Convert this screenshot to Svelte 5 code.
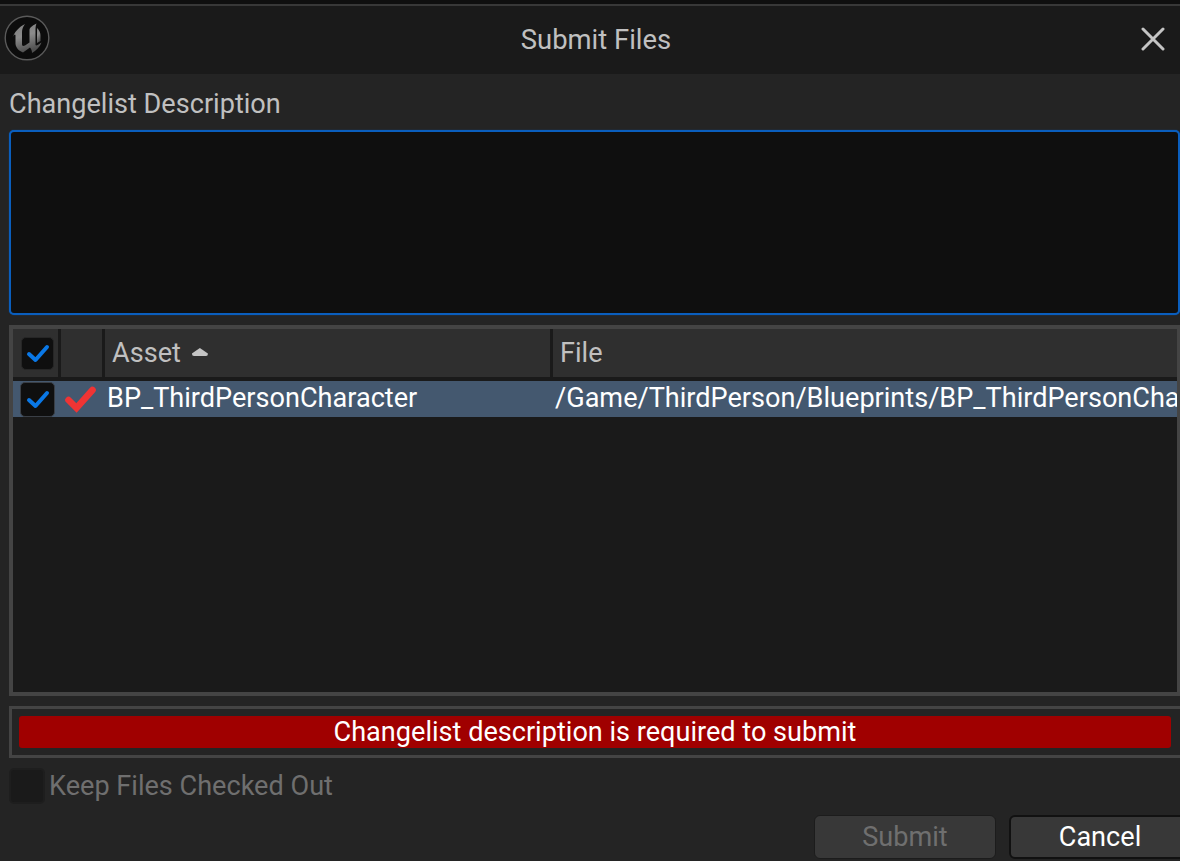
<script>
	const columns = [
		{ name: 'Asset', sorted: true },
		{ name: 'File', sorted: false }
	];
	const files = [
		{
			asset: 'BP_ThirdPersonCharacter',
			path: '/Game/ThirdPerson/Blueprints/BP_ThirdPersonCharacter.BP_ThirdPersonCharacter'
		}
	];
</script>

{#snippet tick()}
	<svg class="tick" viewBox="0 0 24 24" width="24" height="24">
		<path d="M3 13 L9.500 19 L21 6" fill="none" stroke="#0a78e6" stroke-width="4" stroke-linecap="round" stroke-linejoin="round" />
	</svg>
{/snippet}

<div class="window">
	<div class="strip"></div>
	<header class="titlebar">
		<svg class="logo" viewBox="0 0 46 46" width="46" height="46">
			<defs>
				<linearGradient id="ue" x1="0" y1="0" x2="0.300" y2="1">
					<stop offset="0" stop-color="#7c7c7c" />
					<stop offset="0.500" stop-color="#8c8c8c" />
					<stop offset="1" stop-color="#505050" />
				</linearGradient>
			</defs>
			<circle cx="23" cy="23" r="21.800" fill="#0c0c0c" stroke="#5a5a5a" stroke-width="1.400" />
			<path fill="url(#ue)" d="M8 23.500 C10.500 17 15 12 21 9 C19 12 18 14 18 17 L18 29 C18 31 19 31.500 21 30.500 L25.500 27.500 L25.500 15 C25.500 13 27.500 11 32.500 8.500 C31.500 11 31.500 13 31.500 16 L31.500 30 C32 31 33.500 30.500 37.500 27.500 C36 32 32 35.500 28 38 C28 35.500 27 33.500 26 32.500 L19 37.500 C15 36 12 33 11.500 29 L11.500 20.500 C11.500 18.500 9.500 19.500 8 23.500 Z" />
			<path fill="url(#ue)" d="M33 13 C35.500 15 36.500 18 36.500 21 L36.500 26 L33 28 Z" />
		</svg>
		<h1>Submit Files</h1>
		<button class="close" aria-label="Close">
			<svg viewBox="0 0 24 24" width="24" height="24">
				<path d="M2 2 L22 22 M22 2 L2 22" stroke="#c4c4c4" stroke-width="3" stroke-linecap="round" fill="none" />
			</svg>
		</button>
	</header>

	<main class="body">
		<div class="label">Changelist Description</div>
		<div class="description"></div>

		<div class="table">
			<div class="head">
				<div class="cell check-col"><span class="checkbox">{@render tick()}</span></div>
				<div class="cell state-col"></div>
				{#each columns as col}
					<div class="cell col" class:asset-col={col.sorted}>
						{col.name}
						{#if col.sorted}<span class="sort"></span>{/if}
					</div>
				{/each}
			</div>
			{#each files as f}
				<div class="row">
					<div class="row-check"><span class="checkbox">{@render tick()}</span></div>
					<svg class="state" viewBox="0 0 32 28" width="32" height="28">
						<path d="M3.500 15 L11.500 23 L27.500 5" fill="none" stroke="#f03434" stroke-width="6.600" stroke-linecap="round" stroke-linejoin="miter" />
					</svg>
					<div class="row-asset">{f.asset}</div>
					<div class="row-file">{f.path}</div>
				</div>
			{/each}
		</div>

		<div class="error-box">
			<div class="error">Changelist description is required to submit</div>
		</div>

		<label class="keep">
			<span class="checkbox off"></span>
			Keep Files Checked Out
		</label>

		<div class="buttons">
			<button class="btn" disabled>Submit</button>
			<button class="btn cancel">Cancel</button>
		</div>
	</main>
</div>

<style>
	:global(body) {
		margin: 0;
		background: #242424;
		overflow: hidden;
	}
	.window {
		width: 1180px;
		height: 861px;
		display: flex;
		flex-direction: column;
		overflow: hidden;
		font-family: Roboto, sans-serif;
		font-size: 27.100px;
		line-height: 32px;
		color: #c0c0c0;
	}
	.strip {
		height: 4px;
		background: #0f0f0f;
		border-bottom: 2px solid #383838;
	}
	.titlebar {
		height: 68px;
		background: #1a1a1a;
		display: flex;
		align-items: center;
		position: relative;
		padding: 0 0 2px 4px;
		box-sizing: border-box;
	}
	.logo {
		margin-top: -3px;
	}
	h1 {
		position: absolute;
		left: 0;
		right: 0;
		margin: 0;
		text-align: center;
		font-size: 27.400px;
		font-weight: 400;
		color: #c0c0c0;
		top: 18px;
		padding-left: 12px;
	}
	.close {
		margin-left: auto;
		margin-right: 15px;
		padding: 0;
		border: 0;
		background: none;
		display: flex;
	}
	.body {
		flex: 1;
		background: #242424;
		padding: 14px 0 0 9px;
		display: flex;
		flex-direction: column;
		min-height: 0;
	}
	.label {
		height: 42px;
	}
	.description {
		height: 185px;
		box-sizing: border-box;
		background: #0f0f0f;
		border: 2px solid #0a5ebd;
		border-radius: 5px;
		box-shadow: 0 0 1px #0a5ebd;
	}
	.table {
		margin-top: 10px;
		height: 371px;
		box-sizing: border-box;
		border: 4px solid #444;
		border-right-width: 3px;
		background: #1a1a1a;
		overflow: hidden;
	}
	.head {
		display: flex;
		height: 48px;
		background: #2f2f2f;
	}
	.cell {
		box-sizing: border-box;
		display: flex;
		align-items: center;
		border-right: 3px solid #1a1a1a;
	}
	.check-col {
		width: 48px;
		padding-left: 8px;
	}
	.state-col {
		width: 44px;
	}
	.col {
		padding-left: 7px;
		color: #c0c0c0;
		flex: 1;
		border-right: 0;
		gap: 11px;
	}
	.asset-col {
		flex: none;
		width: 448px;
		border-right: 3px solid #1a1a1a;
	}
	.sort {
		width: 16px;
		height: 8px;
		background: #c4c4c4;
		clip-path: polygon(50% 0, 100% 70%, 100% 100%, 0 100%, 0 70%);
		border-radius: 2px;
		margin-top: -2px;
	}
	.checkbox {
		width: 33px;
		height: 33px;
		box-sizing: border-box;
		border-radius: 5px;
		background: #0f0f0f;
		border: 1px solid #262626;
		display: flex;
		align-items: center;
		justify-content: center;
		flex: none;
	}
	.row {
		display: flex;
		align-items: center;
		height: 36px;
		margin-top: 4px;
		background: #44586f;
		color: #fff;
		white-space: nowrap;
	}
	.row-check {
		width: 51px;
		padding-left: 7px;
		box-sizing: border-box;
		flex: none;
	}
	.row .checkbox {
		width: 35px;
		height: 35px;
		border-color: #3a3f46;
	}
	.state {
		flex: none;
		margin-left: 1px;
	}
	.row-asset,
	.row-file {
		margin-top: -3px;
	}
	.row-asset {
		width: 448px;
		box-sizing: border-box;
		padding-left: 10px;
		flex: none;
	}
	.row-file {
		flex: 1;
		min-width: 0;
		padding-left: 10px;
		overflow: hidden;
	}
	.error-box {
		margin-top: 10px;
		height: 52px;
		box-sizing: border-box;
		border: 3px solid #444;
		border-right-width: 0;
		padding: 7px 9px 6px 7px;
	}
	.error {
		height: 32px;
		background: #a00000;
		border-radius: 3px;
		color: #fff;
		text-align: center;
	}
	.keep {
		margin-top: 9px;
		display: flex;
		align-items: center;
		gap: 4px;
		color: #6f6f6f;
		height: 37px;
	}
	.checkbox.off {
		width: 36px;
		height: 36px;
		background: #1a1a1a;
		border: 2px solid #1e1e1e;
	}
	.buttons {
		display: flex;
		justify-content: flex-end;
		gap: 13px;
		margin-top: 11px;
		margin-right: -11px;
	}
	.btn {
		width: 182px;
		height: 44px;
		box-sizing: border-box;
		border-radius: 6px;
		border: 1px solid #1c1c1c;
		background: #383838;
		color: #6f6f6f;
		font: inherit;
		padding: 0;
	}
	.cancel {
		border: 2px solid #111;
		color: #fff;
	}
</style>
